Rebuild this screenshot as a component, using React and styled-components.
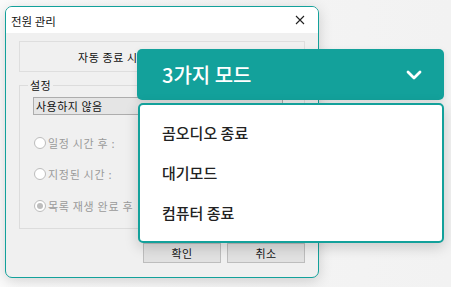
import React from "react";
import styled, { createGlobalStyle } from "styled-components";

const TEAL = "#13a19b";
const KR = `"Noto Sans CJK KR", "Noto Sans", sans-serif`;

const Global = createGlobalStyle`
  html, body { margin: 0; padding: 0; }
  body { background: #f4f4f4; font-family: ${KR}; }
  * { box-sizing: border-box; }
`;

const Stage = styled.div`
  position: relative;
  width: 451px;
  height: 287px;
  overflow: hidden;
  padding: 6px 0 0 5px;
  background: linear-gradient(90deg, #fbfbfb 0%, #f4f4f4 60%, #f2f2f2 100%);
`;

const Window = styled.div`
  width: 314px;
  height: 272px;
  border: 1px solid ${TEAL};
  border-radius: 7px;
  background: #f0f0f0;
  box-shadow: 0 3px 14px rgba(0, 0, 0, 0.16);
  display: flex;
  flex-direction: column;
  overflow: hidden;
`;

const TitleBar = styled.div`
  height: 26px;
  background: #ffffff;
  display: flex;
  align-items: center;
  justify-content: space-between;
  padding: 0 13px 0 5px;
  flex-shrink: 0;
`;

const Title = styled.span`
  font-size: 11.5px;
  line-height: 14px;
  color: #111;
  margin-top: 2px;
`;

const CloseIcon = () => (
  <svg width="10" height="10" viewBox="0 0 10 10">
    <path d="M1 1 L9 9 M9 1 L1 9" stroke="#222" strokeWidth="1.1" />
  </svg>
);

const Body = styled.div`
  flex: 1;
  display: flex;
  flex-direction: column;
  padding: 8px 13px 0 13px;
`;

const InfoBox = styled.div`
  height: 31px;
  border: 1px solid #dedede;
  background: #f0f0f0;
  display: flex;
  align-items: center;
  padding-left: 58px;
  font-size: 11px;
  letter-spacing: 0.6px;
  color: #111;
  white-space: nowrap;
  overflow: hidden;
`;

const Group = styled.fieldset`
  margin: 7px 0 0 0;
  height: 150px;
  border: 1px solid #dcdcdc;
  padding: 4px 0 0 13px;
  display: flex;
  flex-direction: column;
`;

const Legend = styled.legend`
  font-size: 11px;
  line-height: 13px;
  letter-spacing: 0.5px;
  color: #111;
  padding: 0 2px;
  margin-left: -5px;
`;

const Select = styled.div`
  width: 250px;
  height: 18px;
  margin-top: 1px;
  border: 1px solid #adadad;
  background: #e5e5e5;
  font-size: 11px;
  line-height: 16px;
  letter-spacing: 0.5px;
  padding-left: 2px;
  color: #111;
`;

const RadioRow = styled.div`
  display: flex;
  align-items: center;
  gap: 2px;
  margin-top: ${(p) => p.$top}px;
  font-size: 11px;
  line-height: 14px;
  letter-spacing: 0.7px;
  color: #9a9a9a;
  margin-left: 1px;
`;

const RadioCircle = styled.span`
  width: 12px;
  height: 12px;
  border-radius: 50%;
  border: 1px solid #bcbcbc;
  background: #fff;
  display: flex;
  align-items: center;
  justify-content: center;
  &::after {
    content: "";
    width: 6px;
    height: 6px;
    border-radius: 50%;
    background: ${(p) => (p.$checked ? "#bdbdbd" : "transparent")};
  }
`;

const ButtonRow = styled.div`
  display: flex;
  justify-content: flex-end;
  gap: 6px;
  margin-top: 14px;
`;

const Button = styled.div`
  width: 78px;
  height: 20px;
  border: 1px solid #bdbdbd;
  background: #e1e1e1;
  font-size: 11px;
  line-height: 18px;
  letter-spacing: 0.5px;
  text-align: center;
  color: #111;
`;

const Dropdown = styled.div`
  position: absolute;
  left: 137px;
  top: 49px;
  width: 307px;
  display: flex;
  flex-direction: column;
  gap: 3px;
`;

const Header = styled.div`
  height: 51px;
  background: ${TEAL};
  border-radius: 5px;
  display: flex;
  align-items: center;
  justify-content: space-between;
  padding: 0 22px 0 25px;
  color: #fff;
  font-size: 20px;
  font-weight: 500;
  box-shadow: 0 2px 6px rgba(0, 0, 0, 0.1);
`;

const HeaderText = styled.span`
  line-height: 24px;
`;

const Chevron = () => (
  <svg width="16" height="10" viewBox="0 0 16 10">
    <polyline
      points="2,2 8,8 14,2"
      fill="none"
      stroke="#fff"
      strokeWidth="2.8"
      strokeLinecap="round"
      strokeLinejoin="round"
    />
  </svg>
);

const Menu = styled.div`
  height: 140px;
  margin-left: 1px;
  background: #fff;
  border: 2px solid ${TEAL};
  border-radius: 5px;
  padding: 7px 0;
  display: flex;
  flex-direction: column;
  box-shadow: 0 4px 14px rgba(0, 0, 0, 0.18);
`;

const Item = styled.div`
  height: 40px;
  display: flex;
  align-items: center;
  padding-left: 22px;
  font-size: 15px;
  font-weight: 500;
  color: #222;
`;

export default function App() {
  return (
    <>
      <Global />
      <Stage>
        <Window>
          <TitleBar>
            <Title>전원 관리</Title>
            <CloseIcon />
          </TitleBar>
          <Body>
            <InfoBox>자동 종료 시간 미설정</InfoBox>
            <Group>
              <Legend>설정</Legend>
              <Select>사용하지 않음</Select>
              <RadioRow $top={21}>
                <RadioCircle />
                일정 시간 후 :
              </RadioRow>
              <RadioRow $top={17}>
                <RadioCircle />
                지정된 시간 :
              </RadioRow>
              <RadioRow $top={18}>
                <RadioCircle $checked />
                목록 재생 완료 후
              </RadioRow>
            </Group>
            <ButtonRow>
              <Button>확인</Button>
              <Button>취소</Button>
            </ButtonRow>
          </Body>
        </Window>
        <Dropdown>
          <Header>
            <HeaderText>3가지 모드</HeaderText>
            <Chevron />
          </Header>
          <Menu>
            <Item>곰오디오 종료</Item>
            <Item>대기모드</Item>
            <Item>컴퓨터 종료</Item>
          </Menu>
        </Dropdown>
      </Stage>
    </>
  );
}
